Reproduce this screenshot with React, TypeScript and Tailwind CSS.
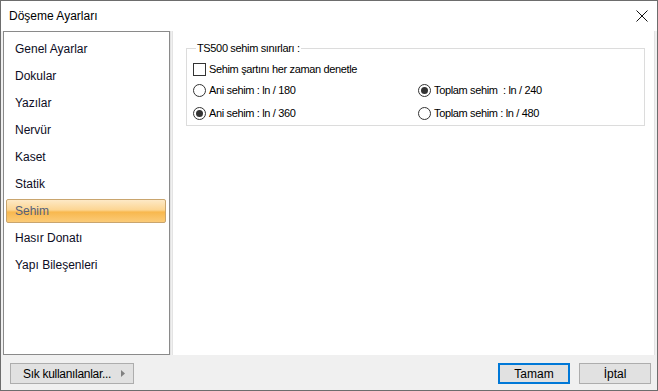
import React, { useState } from 'react';

const menu = ['Genel Ayarlar', 'Dokular', 'Yazılar', 'Nervür', 'Kaset', 'Statik', 'Sehim', 'Hasır Donatı', 'Yapı Bileşenleri'];

function Radio({ checked }: { checked: boolean }) {
  return (
    <span className="flex h-[13px] w-[13px] shrink-0 items-center justify-center rounded-full border border-[#333333] bg-white">
      {checked && <span className="h-[7px] w-[7px] rounded-full bg-[#333333]" />}
    </span>
  );
}

export default function App() {
  const [selected] = useState('Sehim');

  return (
    <div className="flex h-[391px] w-[658px] flex-col border border-[#6d6d6d] bg-[#f0f0f0] font-['Liberation_Sans',Arial,sans-serif] text-black">
      {/* title bar */}
      <div className="flex h-[30px] shrink-0 items-center justify-between bg-white pl-[8px] pr-[8px]">
        <span className="text-[12px] text-black">Döşeme Ayarları</span>
        <svg width="12" height="12" viewBox="0 0 12 12" className="mr-[1px] mt-[-1px]">
          <path d="M0.5 0.5 L11.5 11.5 M11.5 0.5 L0.5 11.5" stroke="#111" strokeWidth="1" fill="none" />
        </svg>
      </div>

      {/* body */}
      <div className="flex h-[324px] shrink-0 pl-[2px] pr-[2px]">
        <div className="flex w-[167px] shrink-0 flex-col border border-[#8a8a8a] bg-white pl-[2px] pr-[3px] pt-[3px]">
          {menu.map((m) =>
            m === selected ? (
              <div key={m} className="flex h-[27px] items-center">
                <div className="flex h-[24px] w-full items-center rounded-[2px] border border-[#c9a56e] bg-[linear-gradient(to_bottom,#fde9c6_0%,#fcd592_45%,#f8b84e_55%,#fbcb78_100%)] pl-[8px] text-[12px] text-[#56617a]">
                  {m}
                </div>
              </div>
            ) : (
              <div key={m} className="flex h-[27px] items-center pl-[9px] text-[12px] text-[#0c0c24]">
                {m}
              </div>
            )
          )}
        </div>
        <div className="w-[1px] shrink-0 bg-[#e2e2e2]" />
        <div className="ml-[1px] flex-1 border-l border-r border-[#e3e3e3] bg-white pl-[13px] pr-[9px] pt-[9px]">
          <fieldset className="h-[86px] border border-[#dcdcdc] pl-[6px] pr-[6px] tracking-[-0.35px]">
            <legend className="ml-[3px] px-[1px] text-[11px] text-black">TS500 sehim sınırları :</legend>
            <div className="mt-[3px] flex h-[20px] items-center gap-[3px] text-[11px]">
              <span className="h-[13px] w-[13px] shrink-0 border border-[#333333] bg-white" />
              <span>Sehim şartını her zaman denetle</span>
            </div>
            <div className="grid grid-cols-[225px_1fr] text-[11px]">
              <div className="flex h-[21px] items-center gap-[3px]">
                <Radio checked={false} />
                <span>Ani sehim : ln / 180</span>
              </div>
              <div className="flex h-[21px] items-center gap-[3px]">
                <Radio checked={true} />
                <span className="whitespace-pre">Toplam sehim  : ln / 240</span>
              </div>
              <div className="flex h-[25px] items-center gap-[3px]">
                <Radio checked={true} />
                <span>Ani sehim : ln / 360</span>
              </div>
              <div className="flex h-[25px] items-center gap-[3px]">
                <Radio checked={false} />
                <span>Toplam sehim : ln / 480</span>
              </div>
            </div>
          </fieldset>
        </div>
      </div>

      {/* footer */}
      <div className="flex flex-1 items-start pl-[9px] pr-[6px] pt-[8px]">
        <button className="flex h-[21px] w-[124px] items-center justify-between border border-[#adadad] bg-[#e1e1e1] pl-[12px] pr-[8px] text-[12px] tracking-[-0.3px]">
          <span>Sık kullanılanlar...</span>
          <svg width="4" height="7" viewBox="0 0 4 7">
            <path d="M0 0 L4 3.5 L0 7 Z" fill="#808080" />
          </svg>
        </button>
        <div className="ml-auto flex gap-[9px]">
          <button className="flex h-[21px] w-[72px] items-center justify-center border-2 border-[#0078d7] bg-[#e1e1e1] text-[12px]">
            Tamam
          </button>
          <button className="flex h-[21px] w-[72px] items-center justify-center border border-[#adadad] bg-[#e1e1e1] text-[12px]">
            İptal
          </button>
        </div>
      </div>
    </div>
  );
}
